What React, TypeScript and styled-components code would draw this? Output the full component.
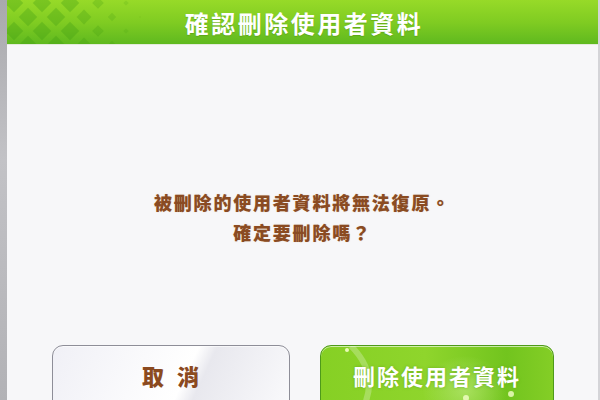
import React from "react";
import styled, { createGlobalStyle } from "styled-components";

const Global = createGlobalStyle`
  html, body { margin: 0; padding: 0; width: 600px; height: 400px; overflow: hidden; }
  body { font-family: "Noto Sans CJK TC", "Noto Sans", sans-serif; background: #b4b4b8; }
`;

const Page = styled.div`
  display: flex;
  width: 600px;
  height: 400px;
  overflow: hidden;
`;

const Edge = styled.div`
  width: 7px;
  flex: none;
  background: linear-gradient(to bottom, #a9a9ad, #c2c2c6 40%, #b2b2b6);
`;

const Dialog = styled.div`
  flex: 1;
  display: flex;
  flex-direction: column;
  background: #f7f7f9;
  border-right: 2px solid #d4d4d8;
`;

const Header = styled.div`
  position: relative;
  height: 45px;
  flex: none;
  display: flex;
  align-items: center;
  justify-content: center;
  background: linear-gradient(to bottom, #97da28 0%, #80cc22 50%, #5fb91f 100%);
  border-bottom: 1px solid #e4eadc;
  box-sizing: border-box;
  overflow: hidden;
`;

const Pattern = styled.svg`
  position: absolute;
  left: 0;
  top: 0;
`;

const Title = styled.h1`
  position: relative;
  margin: 0 0 0 3px;
  font-size: 24px;
  font-weight: 700;
  letter-spacing: 2.5px;
  color: #ffffff;
  text-shadow: 0 1px 1px rgba(60, 120, 10, 0.35);
`;

const Body = styled.div`
  flex: 1;
  display: flex;
  flex-direction: column;
  align-items: center;
`;

const Message = styled.p`
  margin: 142px 0 0;
  font-size: 18px;
  font-weight: 900;
  line-height: 30px;
  letter-spacing: 1.8px;
  color: #8a4b22;
  text-align: center;
  text-shadow: 0 0 1px rgba(200, 140, 90, 0.5);
`;

const Buttons = styled.div`
  display: flex;
  gap: 30px;
  margin-top: 98px;
  align-self: flex-start;
  padding-left: 45px;
`;

const Button = styled.div<{ $primary?: boolean }>`
  position: relative;
  box-sizing: border-box;
  width: ${(p) => (p.$primary ? 234 : 238)}px;
  height: 66px;
  border-radius: 11px;
  display: flex;
  align-items: flex-start;
  justify-content: center;
  padding-top: 13px;
  padding-left: ${(p) => (p.$primary ? 0 : 12)}px;
  overflow: hidden;
  font-size: 22px;
  font-weight: ${(p) => (p.$primary ? 700 : 900)};
  letter-spacing: ${(p) => (p.$primary ? 2 : 13)}px;
  color: ${(p) => (p.$primary ? "#ffffff" : "#8b4a1f")};
  text-shadow: ${(p) => (p.$primary ? "0 0 3px rgba(90,150,20,0.6)" : "none")};
  border: 1.5px solid ${(p) => (p.$primary ? "#4e9a1a" : "#8e8e98")};
  background: ${(p) =>
    p.$primary
      ? "radial-gradient(ellipse 60px 50px at 62% 70%, rgba(200,240,140,0.55), rgba(200,240,140,0) 70%), linear-gradient(to right, #86d024 0%, #8fd52c 45%, #72c41e 80%, #84ce26 100%)"
      : "linear-gradient(115deg, #f0f0f6 0%, #ffffff 55%, #e8e8ee 62%, #fafafc 100%)"};
  box-shadow: inset 0 1px 0 rgba(255, 255, 255, 0.6);
`;

const Label = styled.span`
  position: relative;
`;

const Sparkle = styled.svg`
  position: absolute;
  left: 0;
  top: 0;
`;

function DiamondPattern() {
  const items: React.ReactNode[] = [];
  const pitch = 14;
  for (let c = 0; c < 12; c++) {
    for (let r = -1; r < 5; r++) {
      const cx = 7 + c * pitch;
      const cy = r * pitch * 2 + (c % 2 ? pitch : 0) + 3;
      if (cy > 50) continue;
      let s: number;
      if (c < 5) s = 9.2;
      else s = Math.max(0, 9 - (c - 4) * 1.6);
      if (s <= 0.8) continue;
      const op = c < 5 ? 0.32 : Math.max(0.1, 0.32 - (c - 4) * 0.04);
      items.push(
        <polygon
          key={`${c}-${r}`}
          points={`${cx},${cy - s} ${cx + s},${cy} ${cx},${cy + s} ${cx - s},${cy}`}
          fill="#3f9a12"
          opacity={op}
        />
      );
    }
  }
  return (
    <Pattern width="180" height="45" viewBox="0 0 180 45">
      {items}
    </Pattern>
  );
}

export default function App() {
  return (
    <Page>
      <Global />
      <Edge />
      <Dialog>
        <Header>
          <DiamondPattern />
          <Title>確認刪除使用者資料</Title>
        </Header>
        <Body>
          <Message>
            被刪除的使用者資料將無法復原。
            <br />
            確定要刪除嗎？
          </Message>
          <Buttons>
            <Button>
              <Label>取消</Label>
            </Button>
            <Button $primary>
              <Sparkle width="234" height="66" viewBox="0 0 234 66">
                <circle cx="26" cy="4" r="2" fill="#f4ffc8" opacity="0.9" />
                <circle cx="145" cy="52" r="3" fill="#f4ffc8" opacity="0.8" />
                <circle cx="190" cy="48" r="3" fill="#f4ffc8" opacity="0.8" />
                <path d="M30 0 Q 60 30 40 66" stroke="rgba(255,255,255,0.25)" strokeWidth="6" fill="none" />
              </Sparkle>
              <Label>刪除使用者資料</Label>
            </Button>
          </Buttons>
        </Body>
      </Dialog>
    </Page>
  );
}
